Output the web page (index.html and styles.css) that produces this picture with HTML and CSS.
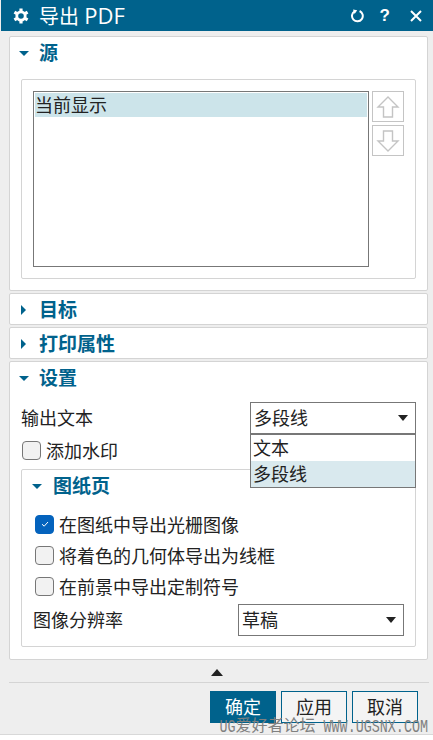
FILE: index.html
```html
<!DOCTYPE html>
<html>

<head>
  <title>导出 PDF</title>
  <link rel="stylesheet" href="styles.css">
</head>

<body>
  <div id="dialog">
    <div id="title-bar">
      <svg class="gear" width="16" height="16" viewBox="0 0 16 16">
        <circle cx="8" cy="8" r="4.2" fill="none" stroke="#fff" stroke-width="2.8"/>
        <path d="M6.4 0.4h3.2v3h-3.2zM6.4 12.6h3.2v3h-3.2z" fill="#fff"/>
        <path d="M6.4 0.4h3.2v3h-3.2zM6.4 12.6h3.2v3h-3.2z" fill="#fff" transform="rotate(60 8 8)"/>
        <path d="M6.4 0.4h3.2v3h-3.2zM6.4 12.6h3.2v3h-3.2z" fill="#fff" transform="rotate(120 8 8)"/>
      </svg>
      <span class="title">导出 <span class="title-en">PDF</span></span>
      <span class="title-icons">
        <svg width="14" height="14" viewBox="0 0 14 14"><path d="M4.6 2.3A5.4 5.4 0 1 0 9.6 2" fill="none" stroke="#fff" stroke-width="2"/><path d="M3 0.4 7.2 1.2 4.6 5z" fill="#fff"/></svg>
        <span class="help">?</span>
        <svg class="close" width="12" height="12" viewBox="0 0 12 12"><path d="M1 1 11 11M11 1 1 11" stroke="#fff" stroke-width="2"/></svg>
      </span>
    </div>

    <div id="main">
      <div class="panel panel-source">
        <div class="head"><i class="tri-down"></i><b>源</b></div>
        <div class="group group-list">
          <div class="list"><div class="list-item">当前显示</div></div>
          <div class="move-btns">
            <div class="move-btn">
              <svg width="24" height="24" viewBox="0 0 24 24"><path d="M12 2 22 12H16.5V22H7.5V12H2Z" fill="#fff" stroke="#c4c4c4" stroke-width="1.4"/></svg>
            </div>
            <div class="move-btn">
              <svg width="24" height="24" viewBox="0 0 24 24"><path d="M12 22 22 12H16.5V2H7.5V12H2Z" fill="#fff" stroke="#c4c4c4" stroke-width="1.4"/></svg>
            </div>
          </div>
        </div>
      </div>

      <div class="panel panel-closed">
        <div class="head"><i class="tri-right"></i><b>目标</b></div>
      </div>
      <div class="panel panel-closed">
        <div class="head"><i class="tri-right"></i><b>打印属性</b></div>
      </div>

      <div class="panel panel-settings">
        <div class="head"><i class="tri-down"></i><b>设置</b></div>
        <div class="row row-output">
          <span>输出文本</span>
          <div class="select select-output">多段线<i class="caret"></i></div>
        </div>
        <label class="check check-watermark"><i class="box"></i>添加水印</label>

        <div class="group group-sheet">
          <div class="head head-sheet"><i class="tri-down"></i><b>图纸页</b></div>
          <label class="check"><i class="box on"><svg width="10" height="10" viewBox="0 0 10 10"><path d="M2 5.2 4.2 7.2 8 3" fill="none" stroke="#fff" stroke-width="1"/></svg></i>在图纸中导出光栅图像</label>
          <label class="check"><i class="box"></i>将着色的几何体导出为线框</label>
          <label class="check"><i class="box"></i>在前景中导出定制符号</label>
          <div class="row row-res">
            <span>图像分辨率</span>
            <div class="select select-res">草稿<i class="caret"></i></div>
          </div>
        </div>
      </div>

      <div class="collapse"><i class="tri-up"></i></div>
      <div class="actions">
        <button class="btn primary">确定</button>
        <button class="btn">应用</button>
        <button class="btn">取消</button>
      </div>
    </div>

    <div class="dropdown">
      <div class="option">文本</div>
      <div class="option active">多段线</div>
    </div>
    <div class="watermark"><span class="wm-en">UG</span><span class="wm-cjk">爱好者论坛</span> <span class="wm-en">WWW.UGSNX.COM</span></div>
  </div>
</body>

</html>
```
FILE: styles.css
```css
html, body {
  padding: 0;
  margin: 0;
  width: 100%;
  height: 100%;
  background: #fff;
  color: #222;
  font-family: "Noto Sans CJK SC", "Liberation Sans", sans-serif;
  font-size: 18px;
  overflow: hidden;
}
#dialog {
  position: relative;
  width: 433px;
  height: 735px;
  background: #eeeeee;
  border-bottom: 1px solid #d8d8d8;
  box-sizing: border-box;
}
#title-bar {
  height: 31px;
  margin-left: 1px;
  background: #00628c;
  color: #fff;
  display: flex;
  align-items: center;
  padding: 0 11px 0 12px;
}
#title-bar .title {
  margin-left: 10px;
  font-family: "Open Sans", "Noto Sans CJK SC", sans-serif;
  font-size: 20px;
  line-height: 31px;
}
#title-bar .title-en {
  font-size: 22px;
}
#title-bar .title-icons {
  margin-left: auto;
  display: flex;
  align-items: center;
}
#title-bar .help {
  margin-left: 16px;
  font-family: "Liberation Sans", sans-serif;
  font-size: 17px;
  font-weight: bold;
  line-height: 16px;
}
#title-bar .close {
  margin-left: 20px;
}
#main {
  padding: 5px 5px 0 9px;
}
.panel {
  background: #fff;
  border: 1px solid #d4d4d4;
  border-radius: 2px;
  margin-bottom: 2px;
  box-sizing: border-box;
}
.panel-source {
  height: 255px;
  padding: 0 11px;
}
.panel-closed {
  height: 32px;
  padding: 0 11px;
}
.panel-settings {
  height: 299px;
  padding: 0 11px;
}
.head {
  display: flex;
  align-items: center;
  height: 31px;
  color: #00628c;
  font-size: 19px;
}
.panel-source > .head {
  height: 32px;
}
.head b {
  margin-left: 10px;
  margin-bottom: 3px;
  font-weight: bold;
}
.panel-settings > .head {
  height: 32px;
}
.tri-down {
  width: 0;
  height: 0;
  margin-left: -2px;
  border-left: 5px solid transparent;
  border-right: 5px solid transparent;
  border-top: 5px solid #00628c;
}
.tri-right {
  width: 0;
  height: 0;
  border-top: 5px solid transparent;
  border-bottom: 5px solid transparent;
  border-left: 5px solid #00628c;
  margin-right: 3px;
}
.tri-up {
  width: 0;
  height: 0;
  border-left: 6.5px solid transparent;
  border-right: 6.5px solid transparent;
  border-bottom: 7px solid #222;
}
.group {
  border: 1px solid #d4d4d4;
  border-radius: 2px;
  box-sizing: border-box;
}
.group-list {
  display: flex;
  gap: 3px;
  height: 200px;
  margin-top: 10px;
  padding: 11px 11px 0 11px;
}
.list {
  width: 336px;
  height: 176px;
  border: 1px solid #777;
  padding: 1px;
  box-sizing: border-box;
}
.list-item {
  height: 24px;
  line-height: 23px;
  background: #cce4ea;
}
.move-btns {
  display: flex;
  flex-direction: column;
  gap: 3px;
}
.move-btn {
  width: 32px;
  height: 31px;
  border: 1px solid #c4c4c4;
  box-sizing: border-box;
  display: flex;
  align-items: center;
  justify-content: center;
}
.row {
  display: flex;
  align-items: center;
  justify-content: space-between;
}
.row > span {
  margin-bottom: 3px;
}
.row-output {
  height: 32px;
  margin-top: 8px;
}
.select {
  border: 1px solid #777;
  box-sizing: border-box;
  height: 32px;
  line-height: 28px;
  padding-left: 3px;
  padding-bottom: 2px;
  background: #fff;
  display: flex;
  align-items: center;
  justify-content: space-between;
}
.select-output,
.select-res {
  width: 166px;
}
.caret {
  width: 0;
  height: 0;
  margin-right: 7px;
  margin-top: 2px;
  border-left: 5.5px solid transparent;
  border-right: 5.5px solid transparent;
  border-top: 6px solid #222;
}
.check {
  display: flex;
  align-items: center;
  gap: 5px;
  height: 31px;
}
.check-watermark {
  margin-top: 1px;
  margin-left: 1px;
  height: 30px;
}
.box {
  width: 19px;
  height: 19px;
  border: 1px solid #777;
  border-radius: 4px;
  background: #f2f2f2;
  box-sizing: border-box;
  display: flex;
  align-items: center;
  justify-content: center;
}
.box.on {
  background: #0463bd;
  border-color: #0463bd;
}
.group-sheet {
  height: 178px;
  margin-top: 4px;
  padding: 0 11px 0 13px;
}
.group-sheet .head-sheet {
  height: 32px;
  margin-bottom: 7px;
  margin-left: -3px;
}
.group-sheet .head-sheet .tri-down {
  margin-left: 0;
}
.group-sheet .head-sheet b {
  margin-left: 11px;
}
.group-sheet .check {
  margin-left: 0;
  padding-bottom: 1px;
  box-sizing: border-box;
}
.row-res {
  height: 32px;
  margin-top: 2px;
  margin-left: -2px;
}
.collapse {
  height: 20px;
  display: flex;
  align-items: center;
  justify-content: center;
  border-bottom: 1px solid #d4d4d4;
  padding-right: 4px;
  margin-right: -1px;
}
.actions {
  display: flex;
  justify-content: flex-end;
  gap: 5px;
  margin-top: 8px;
  padding-right: 10px;
}
.btn {
  width: 66px;
  height: 32px;
  padding: 0 0 3px 0;
  border: 1px solid #00628c;
  background: #f4f4f4;
  color: #222;
  font-family: inherit;
  font-size: 18px;
  line-height: 26px;
  cursor: pointer;
}
.btn.primary {
  background: #00628c;
  color: #fff;
}
.dropdown {
  position: absolute;
  left: 250px;
  top: 434px;
  width: 166px;
  height: 54px;
  border: 1px solid #777;
  box-sizing: border-box;
  background: #fff;
}
.option {
  height: 26px;
  line-height: 25px;
  padding-left: 2px;
}
.option.active {
  background: #d9e9ee;
}
.watermark {
  position: absolute;
  right: 5px;
  top: 719px;
  font-family: "Liberation Mono", "Noto Sans CJK SC", monospace;
  font-size: 13.4px;
  line-height: 16px;
  color: #808080;
  white-space: nowrap;
}
.wm-en {
  display: inline-block;
  transform: scaleY(1.4);
}
.wm-cjk {
  font-size: 16px;
}
```
